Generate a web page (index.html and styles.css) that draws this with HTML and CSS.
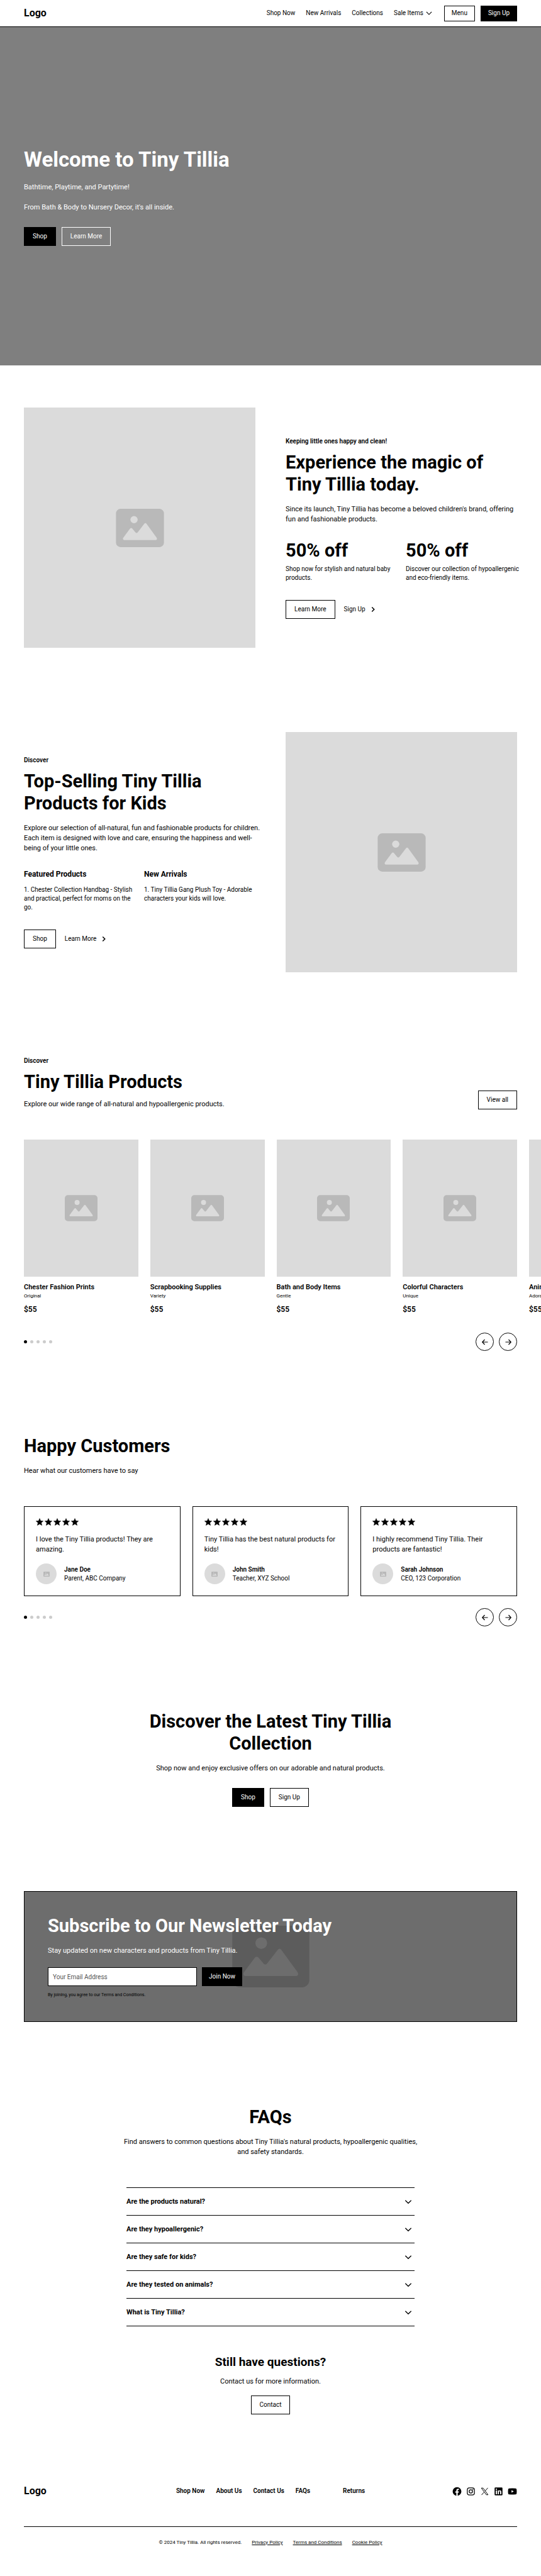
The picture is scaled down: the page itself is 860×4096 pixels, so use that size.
FILE: index.html
```html
<!DOCTYPE html>
<html lang="en">
<head>
<meta charset="utf-8">
<meta name="viewport" content="width=device-width, initial-scale=1">
<title>Tiny Tillia</title>
<link rel="stylesheet" href="styles.css">
</head>
<body>
<svg class="sprite" aria-hidden="true">
  <symbol id="picture" viewBox="0 0 420 336">
    <path class="picture-frame" fill-rule="evenodd" d="M40 0H380A40 40 0 0 1 420 40V296A40 40 0 0 1 380 336H40A40 40 0 0 1 0 296V40A40 40 0 0 1 40 0ZM158 63A32 32 0 1 0 158 127A32 32 0 1 0 158 63ZM65 252Q61 258 61 264Q62 274 73 274H347Q358 274 359 264Q359 258 355 252L267 131Q258 120 248 131L190 206Q180 218 170 206L143 174Q133 163 123 174Z"/>
  </symbol>
  <symbol id="chevron-down" viewBox="0 0 24 24"><path d="M5 8.500L12 15.500L19 8.500" fill="none" stroke="currentColor" stroke-width="2"/></symbol>
  <symbol id="chevron-right" viewBox="0 0 24 24"><path d="M9 6L15 12L9 18" fill="none" stroke="currentColor" stroke-width="2.600"/></symbol>
  <symbol id="arrow-left" viewBox="0 0 24 24"><path d="M21 12H4M11 4L3.500 12L11 20" fill="none" stroke="currentColor" stroke-width="2.400"/></symbol>
  <symbol id="arrow-right" viewBox="0 0 24 24"><path d="M3 12H20M13 4L20.500 12L13 20" fill="none" stroke="currentColor" stroke-width="2.400"/></symbol>
  <symbol id="star" viewBox="0 0 24 24"><path d="M12 .8L15.300 8.300L23.600 9.100L17.300 14.600L19.200 22.800L12 18.500L4.800 22.800L6.700 14.600L.4 9.100L8.700 8.300Z" fill="currentColor" stroke="currentColor" stroke-linejoin="round"/></symbol>
  <symbol id="facebook" viewBox="0 0 24 24"><path fill="currentColor" d="M23 12.070C23 5.950 18.070 1 12 1S1 5.950 1 12.070C1 17.590 5.020 22.170 10.280 23V15.260H7.490V12.070H10.280V9.630C10.280 6.860 11.920 5.340 14.440 5.340C15.640 5.340 16.900 5.550 16.900 5.550V8.270H15.510C14.150 8.270 13.720 9.120 13.720 9.990V12.070H16.770L16.280 15.260H13.720V23C18.980 22.170 23 17.590 23 12.070Z"/></symbol>
  <symbol id="instagram" viewBox="0 0 24 24"><g fill="none" stroke="currentColor" stroke-width="2"><rect x="3" y="3" width="18" height="18" rx="5"/><circle cx="12" cy="12" r="4.200"/></g><circle cx="17.200" cy="6.800" r="1.300" fill="currentColor"/></symbol>
  <symbol id="x-mark" viewBox="0 0 24 24"><path fill="none" stroke="currentColor" stroke-width="1.600" d="M3.500 3.500H7.800L20.500 20.500H16.200ZM20 3L13 11M10.700 13.500L4 21"/></symbol>
  <symbol id="linkedin" viewBox="0 0 24 24"><path fill="currentColor" fill-rule="evenodd" d="M4 2H20A2 2 0 0 1 22 4V20A2 2 0 0 1 20 22H4A2 2 0 0 1 2 20V4A2 2 0 0 1 4 2ZM5 9.500V19H8V9.500ZM6.500 4.800A1.700 1.700 0 1 0 6.500 8.200A1.700 1.700 0 1 0 6.500 4.800ZM10 9.500V19H13V14C13 11 16 11 16 14V19H19V13C19 9 14.500 8.300 13 10.800V9.500Z"/></symbol>
  <symbol id="youtube" viewBox="0 0 24 24"><path fill="currentColor" fill-rule="evenodd" d="M4 4.300Q12 3.500 20 4.300Q22.600 4.600 22.800 7Q23.400 12 22.800 17Q22.600 19.400 20 19.700Q12 20.500 4 19.700Q1.400 19.400 1.200 17Q.6 12 1.200 7Q1.400 4.600 4 4.300ZM9.800 8.700V15.300L15.500 12Z"/></symbol>
</svg>

<header class="header">
  <a class="logo" href="#">Logo</a>
  <nav class="nav" aria-label="Main">
    <a href="#">Shop Now</a>
    <a href="#">New Arrivals</a>
    <a href="#">Collections</a>
    <button class="nav-drop" type="button">Sale Items <svg class="icon-sm"><use href="#chevron-down"/></svg></button>
    <div class="nav-actions">
      <button class="btn btn-small" type="button">Menu</button>
      <button class="btn btn-small btn-dark" type="button">Sign Up</button>
    </div>
  </nav>
</header>

<main>
  <section class="hero">
    <h1>Welcome to Tiny Tillia</h1>
    <p>Bathtime, Playtime, and Partytime!</p>
    <p>From Bath &amp; Body to Nursery Decor, it's all inside.</p>
    <div class="actions">
      <button class="btn btn-dark" type="button">Shop</button>
      <button class="btn btn-light" type="button">Learn More</button>
    </div>
  </section>

  <section class="section split">
    <div class="photo"><svg class="photo-icon"><use href="#picture"/></svg></div>
    <div class="copy">
      <p class="eyebrow">Keeping little ones happy and clean!</p>
      <h2>Experience the magic of Tiny Tillia today.</h2>
      <p class="lead">Since its launch, Tiny Tillia has become a beloved children's brand, offering<br>fun and fashionable products.</p>
      <div class="pair">
        <div>
          <h3 class="stat">50% off</h3>
          <p class="note">Shop now for stylish and natural baby<br>products.</p>
        </div>
        <div>
          <h3 class="stat">50% off</h3>
          <p class="note">Discover our collection of hypoallergenic<br>and eco-friendly items.</p>
        </div>
      </div>
      <div class="actions">
        <button class="btn" type="button">Learn More</button>
        <a class="more" href="#">Sign Up <svg class="icon-sm"><use href="#chevron-right"/></svg></a>
      </div>
    </div>
  </section>

  <section class="section split">
    <div class="copy">
      <p class="eyebrow">Discover</p>
      <h2>Top-Selling Tiny Tillia Products for Kids</h2>
      <p class="lead">Explore our selection of all-natural, fun and fashionable products for children.<br>Each item is designed with love and care, ensuring the happiness and well-<br>being of your little ones.</p>
      <div class="pair">
        <div>
          <h3 class="subhead">Featured Products</h3>
          <p class="note">1. Chester Collection Handbag - Stylish<br>and practical, perfect for moms on the<br>go.</p>
        </div>
        <div>
          <h3 class="subhead">New Arrivals</h3>
          <p class="note">1. Tiny Tillia Gang Plush Toy - Adorable<br>characters your kids will love.</p>
        </div>
      </div>
      <div class="actions">
        <button class="btn" type="button">Shop</button>
        <a class="more" href="#">Learn More <svg class="icon-sm"><use href="#chevron-right"/></svg></a>
      </div>
    </div>
    <div class="photo"><svg class="photo-icon"><use href="#picture"/></svg></div>
  </section>

  <section class="section">
    <div class="section-head">
      <div>
        <p class="eyebrow">Discover</p>
        <h2>Tiny Tillia Products</h2>
        <p class="lead lead-near">Explore our wide range of all-natural and hypoallergenic products.</p>
      </div>
      <button class="btn" type="button">View all</button>
    </div>
    <div class="products">
      <article class="product">
        <div class="product-photo"><svg class="product-icon"><use href="#picture"/></svg></div>
        <h3>Chester Fashion Prints</h3><p>Original</p><strong>$55</strong>
      </article>
      <article class="product">
        <div class="product-photo"><svg class="product-icon"><use href="#picture"/></svg></div>
        <h3>Scrapbooking Supplies</h3><p>Variety</p><strong>$55</strong>
      </article>
      <article class="product">
        <div class="product-photo"><svg class="product-icon"><use href="#picture"/></svg></div>
        <h3>Bath and Body Items</h3><p>Gentle</p><strong>$55</strong>
      </article>
      <article class="product">
        <div class="product-photo"><svg class="product-icon"><use href="#picture"/></svg></div>
        <h3>Colorful Characters</h3><p>Unique</p><strong>$55</strong>
      </article>
      <article class="product">
        <div class="product-photo"><svg class="product-icon"><use href="#picture"/></svg></div>
        <h3>Animal Friends</h3><p>Adorable</p><strong>$55</strong>
      </article>
    </div>
    <div class="pager pager-products">
      <div class="dots"><i class="on"></i><i></i><i></i><i></i><i></i></div>
      <div class="arrows">
        <button type="button" aria-label="Previous"><svg><use href="#arrow-left"/></svg></button>
        <button type="button" aria-label="Next"><svg><use href="#arrow-right"/></svg></button>
      </div>
    </div>
  </section>

  <section class="section">
    <h2>Happy Customers</h2>
    <p class="lead">Hear what our customers have to say</p>
    <div class="reviews">
      <article class="review">
        <div class="stars" role="img" aria-label="5 stars"><svg><use href="#star"/></svg><svg><use href="#star"/></svg><svg><use href="#star"/></svg><svg><use href="#star"/></svg><svg><use href="#star"/></svg></div>
        <p class="quote">I love the Tiny Tillia products! They are<br>amazing.</p>
        <div class="person">
          <div class="avatar"><svg><use href="#picture"/></svg></div>
          <div><strong>Jane Doe</strong><span>Parent, ABC Company</span></div>
        </div>
      </article>
      <article class="review">
        <div class="stars" role="img" aria-label="5 stars"><svg><use href="#star"/></svg><svg><use href="#star"/></svg><svg><use href="#star"/></svg><svg><use href="#star"/></svg><svg><use href="#star"/></svg></div>
        <p class="quote">Tiny Tillia has the best natural products for<br>kids!</p>
        <div class="person">
          <div class="avatar"><svg><use href="#picture"/></svg></div>
          <div><strong>John Smith</strong><span>Teacher, XYZ School</span></div>
        </div>
      </article>
      <article class="review">
        <div class="stars" role="img" aria-label="5 stars"><svg><use href="#star"/></svg><svg><use href="#star"/></svg><svg><use href="#star"/></svg><svg><use href="#star"/></svg><svg><use href="#star"/></svg></div>
        <p class="quote">I highly recommend Tiny Tillia. Their<br>products are fantastic!</p>
        <div class="person">
          <div class="avatar"><svg><use href="#picture"/></svg></div>
          <div><strong>Sarah Johnson</strong><span>CEO, 123 Corporation</span></div>
        </div>
      </article>
    </div>
    <div class="pager">
      <div class="dots"><i class="on"></i><i></i><i></i><i></i><i></i></div>
      <div class="arrows">
        <button type="button" aria-label="Previous"><svg><use href="#arrow-left"/></svg></button>
        <button type="button" aria-label="Next"><svg><use href="#arrow-right"/></svg></button>
      </div>
    </div>
  </section>

  <section class="section centered">
    <h2>Discover the Latest Tiny Tillia<br>Collection</h2>
    <p class="lead">Shop now and enjoy exclusive offers on our adorable and natural products.</p>
    <div class="actions actions-near">
      <button class="btn btn-dark" type="button">Shop</button>
      <button class="btn" type="button">Sign Up</button>
    </div>
  </section>

  <section class="section">
    <div class="newsletter">
      <svg class="newsletter-icon"><use href="#picture"/></svg>
      <div class="newsletter-body">
        <h2>Subscribe to Our Newsletter Today</h2>
        <p class="lead">Stay updated on new characters and products from Tiny Tillia.</p>
        <form class="signup">
          <input type="email" placeholder="Your Email Address" aria-label="Your Email Address">
          <button class="btn btn-dark btn-join" type="button">Join Now</button>
        </form>
        <p class="terms">By joining, you agree to our Terms and Conditions.</p>
      </div>
    </div>
  </section>

  <section class="section centered">
    <h2>FAQs</h2>
    <p class="lead">Find answers to common questions about Tiny Tillia's natural products, hypoallergenic qualities,<br>and safety standards.</p>
    <div class="faq">
      <button type="button">Are the products natural? <svg><use href="#chevron-down"/></svg></button>
      <button type="button">Are they hypoallergenic? <svg><use href="#chevron-down"/></svg></button>
      <button type="button">Are they safe for kids? <svg><use href="#chevron-down"/></svg></button>
      <button type="button">Are they tested on animals? <svg><use href="#chevron-down"/></svg></button>
      <button type="button">What is Tiny Tillia? <svg><use href="#chevron-down"/></svg></button>
    </div>
    <h3 class="ask">Still have questions?</h3>
    <p class="ask-text">Contact us for more information.</p>
    <button class="btn" type="button">Contact</button>
  </section>
</main>

<footer class="footer">
  <div class="footer-top">
    <a class="logo" href="#">Logo</a>
    <nav class="footer-links" aria-label="Footer">
      <a href="#">Shop Now</a>
      <a href="#">About Us</a>
      <a href="#">Contact Us</a>
      <a href="#">FAQs</a>
      <a class="apart" href="#">Returns</a>
    </nav>
    <div class="social">
      <a href="#" aria-label="Facebook"><svg><use href="#facebook"/></svg></a>
      <a href="#" aria-label="Instagram"><svg><use href="#instagram"/></svg></a>
      <a href="#" aria-label="X"><svg><use href="#x-mark"/></svg></a>
      <a href="#" aria-label="LinkedIn"><svg><use href="#linkedin"/></svg></a>
      <a href="#" aria-label="YouTube"><svg><use href="#youtube"/></svg></a>
    </div>
  </div>
  <div class="legal">
    <span>© 2024 Tiny Tillia. All rights reserved.</span>
    <a href="#">Privacy Policy</a>
    <a href="#">Terms and Conditions</a>
    <a href="#">Cookie Policy</a>
  </div>
</footer>
</body>
</html>
```
FILE: styles.css
```css
* { box-sizing: border-box; }

body {
  margin: 0;
  background: #fff;
  color: #000;
  font: 10px/14px Roboto, "Liberation Sans", sans-serif;
}

h1, h2, h3, p { margin: 0; }
a { color: inherit; text-decoration: none; }
button, input { font: inherit; color: inherit; border-radius: 0; }
button { background: none; border: 0; padding: 0; }
svg { display: block; }
.sprite { position: absolute; width: 0; height: 0; }
.picture-frame { fill: var(--tone, #b9b9b9); }
.icon-sm { width: 14px; height: 14px; }

h2 { font-size: 29px; line-height: 35px; font-weight: 700; }
.lead { font-size: 11px; line-height: 16px; margin-top: 14px; white-space: nowrap; }
.lead-near { margin-top: 10px; }
.logo { font-size: 16px; line-height: 16px; font-weight: 700; }

.btn {
  height: 30px;
  padding: 0 13px;
  border: 1px solid #000;
  line-height: 14px;
  white-space: nowrap;
}
.btn-small { height: 25px; padding: 0 11px; }
.btn-dark { background: #000; color: #fff; }
.btn-light { border-color: #fff; color: #fff; }
.btn-join { padding: 0 10px; }

.header {
  display: flex;
  align-items: center;
  justify-content: space-between;
  height: 43px;
  padding: 0 38px;
  border-bottom: 1px solid #000;
}
.nav { display: flex; align-items: center; gap: 17px; }
.nav-drop { display: flex; align-items: center; gap: 2px; }
.nav-actions { display: flex; gap: 9px; }

.hero {
  display: flex;
  flex-direction: column;
  justify-content: center;
  height: 538px;
  padding: 0 38px;
  background: #7f7f7f;
  color: #fff;
}
.hero h1 { font-size: 33px; line-height: 40px; font-weight: 700; }
.hero p { font-size: 11px; line-height: 16px; margin-top: 16px; }
.actions { display: flex; align-items: center; gap: 9px; margin-top: 28px; }
.hero .actions { margin-top: 23px; }
.more { display: flex; align-items: center; gap: 5px; padding-left: 5px; }

.section { padding: 67px 38px; overflow-x: clip; }
.split { display: grid; grid-template-columns: 1fr 1fr; gap: 48px; align-items: center; }
.copy { min-width: 0; }
.photo { display: flex; align-items: center; justify-content: center; height: 382px; background: #dbdbdb; }
.photo-icon { width: 77px; height: 61px; }
.eyebrow { font-weight: 600; line-height: 14px; margin-bottom: 9px; }
.pair { display: grid; grid-template-columns: 1fr 1fr; gap: 14px; margin-top: 24px; }
.pair > div { min-width: 0; }
.stat { font-size: 29px; line-height: 34px; margin-bottom: 6px; }
.subhead { font-size: 12px; line-height: 18px; margin-bottom: 9px; }
.note { white-space: nowrap; }

.section-head { display: flex; justify-content: space-between; align-items: flex-end; }
.products {
  display: grid;
  grid-auto-flow: column;
  grid-auto-columns: calc((100% - 57px) / 4);
  gap: 19px;
  margin-top: 48px;
}
.product-photo { display: flex; align-items: center; justify-content: center; height: 218px; background: #dbdbdb; margin-bottom: 9px; }
.product-icon { width: 52px; height: 42px; }
.product h3 { font-size: 11px; line-height: 16px; font-weight: 600; white-space: nowrap; }
.product p { font-size: 8px; line-height: 12px; }
.product strong { display: block; font-size: 12px; line-height: 18px; font-weight: 600; margin-top: 6px; }

.pager { display: flex; align-items: center; justify-content: space-between; margin-top: 19px; }
.pager-products { margin-top: 28px; }
.dots { display: flex; gap: 5px; }
.dots i { width: 5px; height: 5px; border-radius: 50%; background: #ccc; }
.dots .on { background: #000; }
.arrows { display: flex; gap: 8px; }
.arrows button { display: flex; align-items: center; justify-content: center; width: 29px; height: 29px; border: 1px solid #000; border-radius: 50%; }
.arrows svg { width: 12px; height: 12px; }

.reviews { display: grid; grid-template-columns: repeat(3, 1fr); gap: 19px; margin-top: 48px; }
.review { min-width: 0; border: 1px solid #000; padding: 18px; }
.stars { display: flex; gap: 2px; }
.stars svg { width: 12px; height: 12px; }
.quote { font-size: 11px; line-height: 16px; margin-top: 14px; white-space: nowrap; }
.person { display: flex; align-items: center; gap: 12px; margin-top: 14px; }
.person strong, .person span { display: block; line-height: 14px; }
.person strong { font-weight: 600; }
.avatar { display: flex; align-items: center; justify-content: center; width: 33px; height: 33px; border-radius: 50%; background: #dbdbdb; }
.avatar svg { width: 10px; height: 8px; }

.centered { display: flex; flex-direction: column; align-items: center; text-align: center; }
.actions-near { margin-top: 23px; }

.newsletter { position: relative; border: 1px solid #000; background: #6d6d6d; padding: 37px; }
.newsletter-icon { --tone: #5c5c5c; position: absolute; inset: 0; margin: auto; width: 123px; height: 98px; }
.newsletter-body { position: relative; }
.newsletter h2, .newsletter .lead { color: #fff; }
.signup { display: flex; gap: 8px; margin-top: 18px; }
.signup input { width: 237px; height: 30px; border: 1px solid #000; background: #fff; padding: 0 7px; }
.signup input::placeholder { color: #555; opacity: 1; }
.terms { font-size: 7px; line-height: 10px; margin-top: 9px; }

.faq { width: 100%; max-width: 458px; margin-top: 48px; border-top: 1px solid #000; }
.faq button {
  display: flex;
  align-items: center;
  justify-content: space-between;
  width: 100%;
  height: 44px;
  padding-right: 2px;
  border-bottom: 1px solid #000;
  font-size: 11px;
  font-weight: 700;
}
.faq svg { width: 16px; height: 16px; }
.ask { font-size: 19px; line-height: 26px; margin-top: 44px; }
.ask-text { font-size: 11px; line-height: 16px; margin: 10px 0 14px; }

.footer { padding: 47px 38px 48px; }
.footer-top { display: grid; grid-template-columns: 1fr auto 1fr; align-items: center; padding-bottom: 48px; border-bottom: 1px solid #000; }
.footer-links { display: flex; gap: 18px; font-weight: 600; }
.footer-links .apart { margin-left: 34px; }
.social { display: flex; justify-content: flex-end; gap: 7px; }
.social svg { width: 15px; height: 15px; }
.legal { display: flex; justify-content: center; gap: 16px; padding-top: 19px; font-size: 8px; line-height: 12px; }
.legal a { text-decoration: underline; }
```
